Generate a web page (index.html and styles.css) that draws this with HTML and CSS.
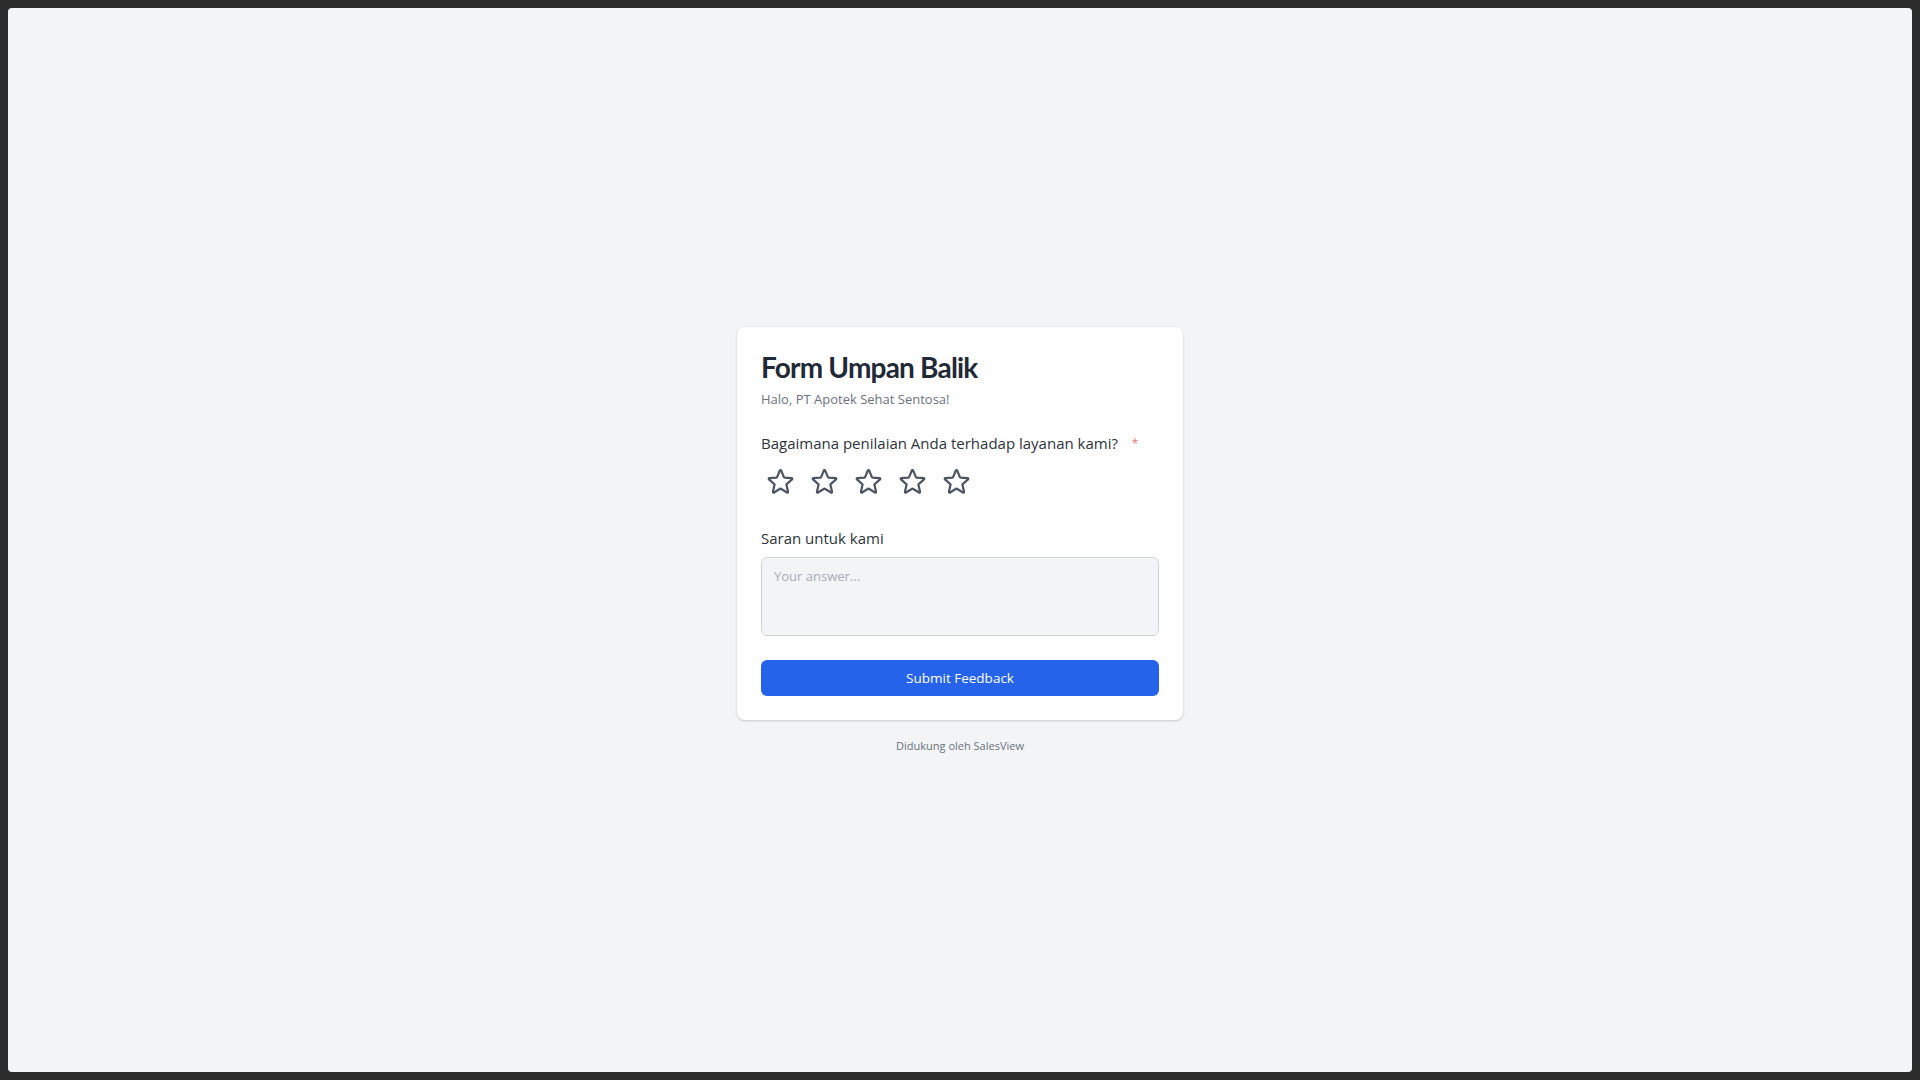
FILE: index.html
```html
<!DOCTYPE html>
<html lang="id">
<head>
<meta charset="utf-8">
<title>Form Umpan Balik</title>
<link rel="stylesheet" href="styles.css">
</head>
<body>
<div class="screen">
  <div class="wrap">
    <form class="card">
      <h1 class="title">Form Umpan Balik</h1>
      <p class="subtitle">Halo, PT Apotek Sehat Sentosa!</p>

      <div class="field-label rating-label">Bagaimana penilaian Anda terhadap layanan kami? <span class="req">*</span></div>
      <div class="stars">
        <button type="button" class="star"><svg viewBox="0 0 24 24" fill="none" stroke="currentColor" stroke-width="1.7"><path stroke-linecap="round" stroke-linejoin="round" d="M11.48 3.499a.562.562 0 0 1 1.040 0l2.125 5.111a.563.563 0 0 0 .475.345l5.518.442c.499.04.701.663.321.988l-4.204 3.602a.563.563 0 0 0-.182.557l1.285 5.385a.562.562 0 0 1-.84.61l-4.725-2.885a.562.562 0 0 0-.586 0L6.982 20.54a.562.562 0 0 1-.84-.61l1.285-5.386a.562.562 0 0 0-.182-.557l-4.204-3.602a.562.562 0 0 1 .321-.988l5.518-.442a.563.563 0 0 0 .475-.345L11.48 3.5Z"/></svg></button>
        <button type="button" class="star"><svg viewBox="0 0 24 24" fill="none" stroke="currentColor" stroke-width="1.7"><path stroke-linecap="round" stroke-linejoin="round" d="M11.48 3.499a.562.562 0 0 1 1.040 0l2.125 5.111a.563.563 0 0 0 .475.345l5.518.442c.499.04.701.663.321.988l-4.204 3.602a.563.563 0 0 0-.182.557l1.285 5.385a.562.562 0 0 1-.84.61l-4.725-2.885a.562.562 0 0 0-.586 0L6.982 20.54a.562.562 0 0 1-.84-.61l1.285-5.386a.562.562 0 0 0-.182-.557l-4.204-3.602a.562.562 0 0 1 .321-.988l5.518-.442a.563.563 0 0 0 .475-.345L11.48 3.5Z"/></svg></button>
        <button type="button" class="star"><svg viewBox="0 0 24 24" fill="none" stroke="currentColor" stroke-width="1.7"><path stroke-linecap="round" stroke-linejoin="round" d="M11.48 3.499a.562.562 0 0 1 1.040 0l2.125 5.111a.563.563 0 0 0 .475.345l5.518.442c.499.04.701.663.321.988l-4.204 3.602a.563.563 0 0 0-.182.557l1.285 5.385a.562.562 0 0 1-.84.61l-4.725-2.885a.562.562 0 0 0-.586 0L6.982 20.54a.562.562 0 0 1-.84-.61l1.285-5.386a.562.562 0 0 0-.182-.557l-4.204-3.602a.562.562 0 0 1 .321-.988l5.518-.442a.563.563 0 0 0 .475-.345L11.48 3.5Z"/></svg></button>
        <button type="button" class="star"><svg viewBox="0 0 24 24" fill="none" stroke="currentColor" stroke-width="1.7"><path stroke-linecap="round" stroke-linejoin="round" d="M11.48 3.499a.562.562 0 0 1 1.040 0l2.125 5.111a.563.563 0 0 0 .475.345l5.518.442c.499.04.701.663.321.988l-4.204 3.602a.563.563 0 0 0-.182.557l1.285 5.385a.562.562 0 0 1-.84.61l-4.725-2.885a.562.562 0 0 0-.586 0L6.982 20.54a.562.562 0 0 1-.84-.61l1.285-5.386a.562.562 0 0 0-.182-.557l-4.204-3.602a.562.562 0 0 1 .321-.988l5.518-.442a.563.563 0 0 0 .475-.345L11.48 3.5Z"/></svg></button>
        <button type="button" class="star"><svg viewBox="0 0 24 24" fill="none" stroke="currentColor" stroke-width="1.7"><path stroke-linecap="round" stroke-linejoin="round" d="M11.48 3.499a.562.562 0 0 1 1.040 0l2.125 5.111a.563.563 0 0 0 .475.345l5.518.442c.499.04.701.663.321.988l-4.204 3.602a.563.563 0 0 0-.182.557l1.285 5.385a.562.562 0 0 1-.84.61l-4.725-2.885a.562.562 0 0 0-.586 0L6.982 20.54a.562.562 0 0 1-.84-.61l1.285-5.386a.562.562 0 0 0-.182-.557l-4.204-3.602a.562.562 0 0 1 .321-.988l5.518-.442a.563.563 0 0 0 .475-.345L11.48 3.5Z"/></svg></button>
      </div>

      <label class="field-label suggest-label" for="saran">Saran untuk kami</label>
      <textarea id="saran" class="answer" placeholder="Your answer..."></textarea>

      <button type="submit" class="submit">Submit Feedback</button>
    </form>
    <p class="footer">Didukung oleh SalesView</p>
  </div>
</div>
</body>
</html>
```

FILE: styles.css
```css
* { box-sizing: border-box; }

html, body {
  margin: 0;
  padding: 0;
}

body {
  background: #2c2c2c;
  padding: 8px;
  font-family: "Open Sans", "Noto Sans", Arial, sans-serif;
}

.screen {
  height: 1064px;
  background: #f3f4f6;
  border-radius: 4px;
  display: flex;
  align-items: center;
  justify-content: center;
}

.wrap {
  display: flex;
  flex-direction: column;
  align-items: center;
  padding-top: 3px;
}

.card {
  width: 446px;
  background: #ffffff;
  border-radius: 8px;
  padding: 24px;
  box-shadow: 0 1px 3px rgba(0, 0, 0, 0.12), 0 1px 2px rgba(0, 0, 0, 0.06);
  display: flex;
  flex-direction: column;
}

.title {
  margin: 0;
  font-family: "Lato", "Inter", sans-serif;
  font-weight: 700;
  font-size: 28px;
  line-height: 32px;
  letter-spacing: -0.8px;
  color: #1f2937;
}

.subtitle {
  margin: 6px 0 0;
  font-size: 13px;
  line-height: 20px;
  font-weight: 400;
  color: #6b7280;
}

.field-label {
  display: block;
  font-size: 15px;
  line-height: 24px;
  color: #2d333b;
}

.rating-label {
  margin-top: 22px;
}

.req {
  color: #f07a7a;
  font-size: 12px;
  margin-left: 10px;
  vertical-align: 1px;
}

.stars {
  display: flex;
  gap: 5px;
  margin-top: 6px;
}

.star {
  border: none;
  background: none;
  padding: 4px;
  margin: 0;
  color: #4b5563;
  cursor: pointer;
  display: flex;
}

.star svg {
  width: 31px;
  height: 31px;
}

.suggest-label {
  margin-top: 25px;
}

.answer {
  margin-top: 7px;
  height: 79px;
  width: 100%;
  resize: none;
  background: #f3f4f6;
  border: 1px solid #d1d5db;
  border-radius: 6px;
  padding: 8px 12px;
  font-family: "Open Sans", "Noto Sans", Arial, sans-serif;
  font-size: 13px;
  line-height: 20px;
  color: #374151;
}

.answer::placeholder {
  color: #a8adb5;
}

.submit {
  margin-top: 24px;
  height: 36px;
  width: 100%;
  border: none;
  border-radius: 6px;
  background: #2563eb;
  color: #ffffff;
  font-family: "Open Sans", "Noto Sans", Arial, sans-serif;
  font-size: 13.5px;
  cursor: pointer;
}

.footer {
  margin: 16px 0 0;
  font-size: 11px;
  line-height: 20px;
  color: #6b7280;
}
```
